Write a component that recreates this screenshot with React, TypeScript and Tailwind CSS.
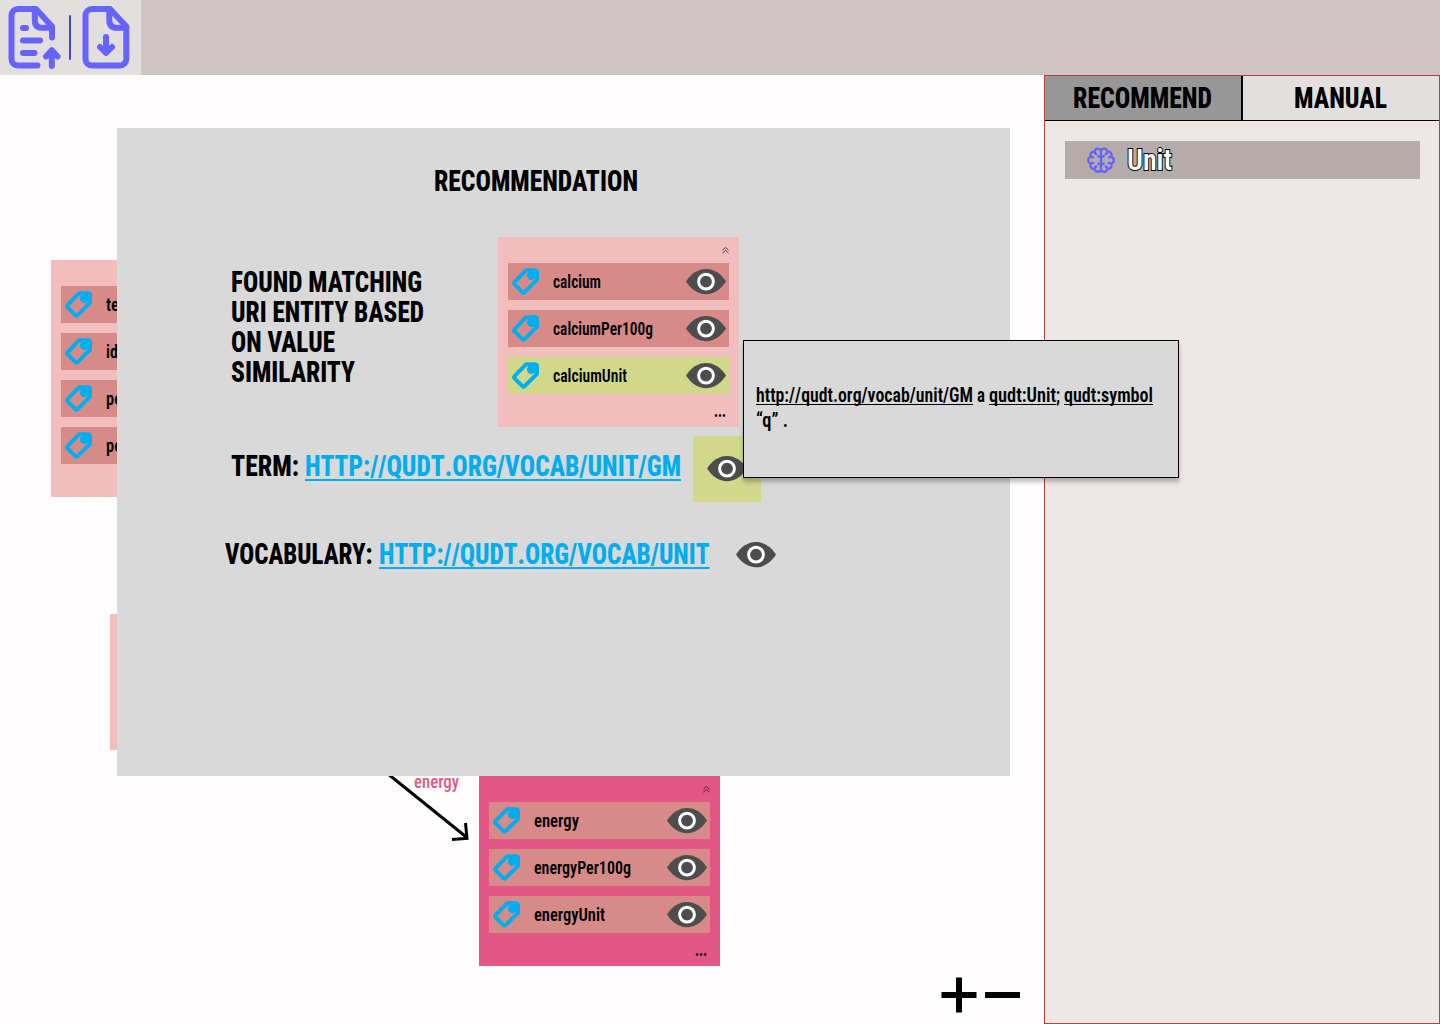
import { useLayoutEffect, useRef, useState } from "react";
import type { ReactNode } from "react";

/* Condensed text run: squeezed horizontally to a given width. */
function Fit({ w, className = "", children }: { w: number; className?: string; children: ReactNode }) {
  const ref = useRef<HTMLSpanElement>(null);
  const [scale, setScale] = useState(1);
  useLayoutEffect(() => {
    if (ref.current && ref.current.offsetWidth) setScale((w / ref.current.getBoundingClientRect().width) * scale);
  }, [w]);
  return (
    <span className="inline-block shrink-0 whitespace-nowrap align-top" style={{ width: w }}>
      <span ref={ref} className={`inline-block origin-left ${className}`} style={{ transform: `scaleX(${scale})` }}>
        {children}
      </span>
    </span>
  );
}

function Eye() {
  return (
    <svg className="h-[26px] w-10 shrink-0" viewBox="0 0 40 26">
      <path d="M0 12.600C5 4.600 12 0 20 0S35 4.600 40 12.600C35 20.600 28 25.300 20 25.300S5 20.600 0 12.600Z" fill="#4d4d4d" />
      <circle cx="20" cy="12.600" r="7.400" fill="none" stroke="#fff" strokeWidth="3" />
    </svg>
  );
}

function Tag() {
  return (
    <svg className="h-7 w-7 shrink-0" viewBox="0 0 28 28" fill="none" stroke="#00aeef" strokeWidth="4" strokeLinejoin="round">
      <path d="M14.200 2.200H22.500Q25 2.200 25 4.500V11.800L12.600 24.200Q11.500 25.300 10.400 24.200L2.600 16.400Q1.500 15.300 2.600 14.200Z" />
      <circle cx="19.400" cy="7.600" r="4.500" fill="#00aeef" stroke="none" />
      <path d="M19.500 2H25V9.500L22 10Z" fill="#00aeef" stroke="none" />
    </svg>
  );
}

function Collapse() {
  return (
    <svg className="h-[7px] w-[7px]" viewBox="0 0 7 7" fill="none" stroke="#222" strokeWidth=".8">
      <path d="M.4 3.200 3.500.4 6.600 3.200M.4 6.200 3.500 3.400 6.600 6.200" />
    </svg>
  );
}

type Row = { name: string; w: number; active?: boolean };

function EntityCard({ rows, tone }: { rows: Row[]; tone: string }) {
  return (
    <div className={`flex w-[241px] flex-col px-[10px] text-[18px] font-semibold leading-[20px] ${tone}`}>
      <div className="flex h-[26px] items-center justify-end">
        <Collapse />
      </div>
      <div className="flex flex-col gap-[10px]">
        {rows.map((r, i) => (
          <div key={i} className={`flex h-[37px] items-center pl-1 pr-[3px] ${r.active ? "bg-[#d1d88a]" : "bg-[#d68b89]"}`}>
            <Tag />
            <div className="flex-1 pl-[13px] pt-px">
              <Fit w={r.w}>{r.name}</Fit>
            </div>
            <Eye />
          </div>
        ))}
      </div>
      <div className="flex h-[33px] items-center justify-end pr-[3px]">
        <Fit w={12} className="font-black">...</Fit>
      </div>
    </div>
  );
}

function Toolbar() {
  return (
    <header className="flex h-[75px] shrink-0 bg-[#cec4c3]">
      <div className="h-full w-[141px] bg-[#e4dfdf]">
        <svg className="h-[75px] w-[141px]" viewBox="0 0 141 75" fill="none" stroke="#6663ff" strokeWidth="6" strokeLinecap="round" strokeLinejoin="round">
          <path d="M37.500 65.500H18A6.500 6.500 0 0 1 11.500 59V15.500A6.500 6.500 0 0 1 18 9H36L52 26.500V37.500" />
          <path d="M34.800 9V20Q34.800 27.800 42 27.800H52" />
          <path d="M23 28H26M23 40.500H40M23 53H34.500M51.800 66V51" />
          <path d="M46 56.500 51.800 50.300 57.500 56.500" />
          <path d="M92 9H110L126.300 26.500V59A6.500 6.500 0 0 1 119.800 65.500H92A6.500 6.500 0 0 1 85.500 59V15.500A6.500 6.500 0 0 1 92 9Z" />
          <path d="M109.300 9V20Q109.300 27.800 116.500 27.800H126.300" />
          <path d="M106 37V52" />
          <path d="M100 47 106 53 112 47" />
          <path d="M70 16V59" stroke="#4347cf" strokeWidth="2" />
        </svg>
      </div>
    </header>
  );
}

function Brain() {
  const half =
    "M14 3.600C12 .6 8.200 1.300 7.800 4.500C4.500 4.300 2.500 7 3.800 9.800C.3 11.300.3 15.200 3.800 16.700C2.500 19.500 4.500 22.300 7.800 22C8.200 25.200 12 26 14 23.200M7.800 4.500C7.800 6 8.300 6.800 9.300 7M3.800 9.800C4.500 10.300 5.300 10.400 6 10.200M3.800 16.700C4.500 15.900 5.300 15.700 6.300 16M7.800 22C7.800 20.300 8.300 19.600 9.300 19.500M14 10.500 11.300 9.300M14 17.800 11.300 16.600";
  return (
    <svg className="h-[27px] w-7" viewBox="0 0 28 27" fill="none" stroke="#6663ff" strokeWidth="2.300" strokeLinecap="round" strokeLinejoin="round">
      <path d={half} />
      <path d={half} transform="matrix(-1 0 0 1 28 0)" />
      <path d="M14 3V24" />
    </svg>
  );
}

function SidePanel() {
  return (
    <aside className="flex w-[396px] shrink-0 flex-col border border-[#b8413f] bg-[#efe6e6]">
      <div className="flex h-[45px] border-b border-black text-[30px] font-extrabold leading-[30px]">
        <div className="w-[196px] bg-[#979797] pl-7 pt-[7px]">
          <Fit w={139}>RECOMMEND</Fit>
        </div>
        <div className="flex-1 border-l-2 border-black bg-[#e4dfdf] pl-[51px] pt-[7px]">
          <Fit w={93}>MANUAL</Fit>
        </div>
      </div>
      <div className="ml-5 mr-[19px] mt-5 flex h-[38px] items-center bg-[#b5acaa] pl-[22px]">
        <Brain />
        <div className="pl-3 text-[30px] leading-[30px]">
          <Fit w={45} className="font-semibold text-white [-webkit-text-stroke:2px_black] [paint-order:stroke_fill]">Unit</Fit>
        </div>
      </div>
    </aside>
  );
}

function Dialog() {
  const link = "text-[#00aeef] underline decoration-2 underline-offset-[3px] [font-kerning:none] [text-decoration-skip-ink:none]";
  return (
    <section className="absolute left-[117px] top-[53px] flex h-[648px] w-[893px] flex-col bg-[#d9d9d9] text-[30px] font-extrabold leading-[30px]">
      <h1 className="pl-[317px] pt-[38px]">
        <Fit w={204}>RECOMMENDATION</Fit>
      </h1>
      <div className="mt-[41px] flex h-[190px] pl-[114px]">
        <div className="flex w-[267px] flex-col pt-[30px]">
          <Fit w={191}>FOUND MATCHING</Fit>
          <Fit w={193}>URI ENTITY BASED</Fit>
          <Fit w={104}>ON VALUE</Fit>
          <Fit w={124}>SIMILARITY</Fit>
        </div>
        <EntityCard
          tone="bg-[#f1bebd]"
          rows={[
            { name: "calcium", w: 48 },
            { name: "calciumPer100g", w: 100 },
            { name: "calciumUnit", w: 74, active: true },
          ]}
        />
      </div>
      <div className="mt-[9px] flex h-[66px] pl-[114px]">
        <div className="flex w-[462px] gap-[6px] pt-[15px]">
          <Fit w={68}>TERM:</Fit>
          <Fit w={376} className={link}>HTTP://QUDT.ORG/VOCAB/UNIT/GM</Fit>
        </div>
        <div className="flex w-[68px] items-center bg-[#d1d88a] pl-[14px]">
          <Eye />
        </div>
      </div>
      <div className="mt-[36px] flex h-[34px] items-center pl-[108px]">
        <div className="flex w-[511px] gap-[6px] pb-[2px]">
          <Fit w={147.5}>VOCABULARY:</Fit>
          <Fit w={330.5} className={link}>HTTP://QUDT.ORG/VOCAB/UNIT</Fit>
        </div>
        <Eye />
      </div>
    </section>
  );
}

function Tooltip() {
  const link = "underline decoration-1 underline-offset-2 [font-kerning:none] [text-decoration-skip-ink:none]";
  return (
    <div className="absolute left-[743px] top-[340px] flex h-[138px] w-[436px] flex-col border border-black bg-[#d9d9d9] pl-3 pt-[42px] text-[20px] font-semibold leading-[25px] shadow-[0_4px_4px_rgba(0,0,0,0.25)]">
      <div className="flex h-[25px]">
        <Fit w={217} className={link}>http://qudt.org/vocab/unit/GM</Fit>
        <span className="w-1" />
        <Fit w={8}>a</Fit>
        <span className="w-1" />
        <Fit w={67} className={link}>qudt:Unit</Fit>
        <Fit w={4}>;</Fit>
        <span className="w-1" />
        <Fit w={89} className={link}>qudt:symbol</Fit>
      </div>
      <Fit w={32}>“q” .</Fit>
    </div>
  );
}

export default function App() {
  return (
    <div className="relative flex h-[1024px] w-[1440px] flex-col overflow-hidden bg-[#fffdfe] font-['Roboto',sans-serif] text-black [font-stretch:75%]">
      <Toolbar />
      <div className="flex flex-1">
        <main className="relative flex-1">
          <div className="absolute left-[51px] top-[185px]">
            <EntityCard tone="bg-[#f1bebd]" rows={[{ name: "te", w: 13 }, { name: "id", w: 12 }, { name: "pe", w: 16 }, { name: "pe", w: 16 }]} />
          </div>
          <div className="absolute left-[110px] top-[539px] h-[136px] w-[241px] bg-[#f1bebd]" />
          <svg className="absolute left-[380px] top-[690px] h-20 w-[100px]" viewBox="0 0 100 80" fill="none" stroke="#000" strokeWidth="3">
            <path d="M0 2.500 87.500 73M85.500 58 87 73.300 72 74.500" />
          </svg>
          <div className="absolute left-[414px] top-[696px] leading-[22px] text-[#e25786]">
            <Fit w={45} className="text-[18px] font-medium">energy</Fit>
          </div>
          <div className="absolute left-[479px] top-[701px]">
            <EntityCard tone="bg-[#e25786]" rows={[{ name: "energy", w: 45 }, { name: "energyPer100g", w: 97 }, { name: "energyUnit", w: 71 }]} />
          </div>
          <svg className="absolute left-[941px] top-[902px] h-9 w-20" viewBox="0 0 80 36" stroke="#000" strokeWidth="6">
            <path d="M.5 18H35.500M18 .5V35.500M44 18H79" />
          </svg>
          <Dialog />
        </main>
        <SidePanel />
      </div>
      <Tooltip />
    </div>
  );
}
